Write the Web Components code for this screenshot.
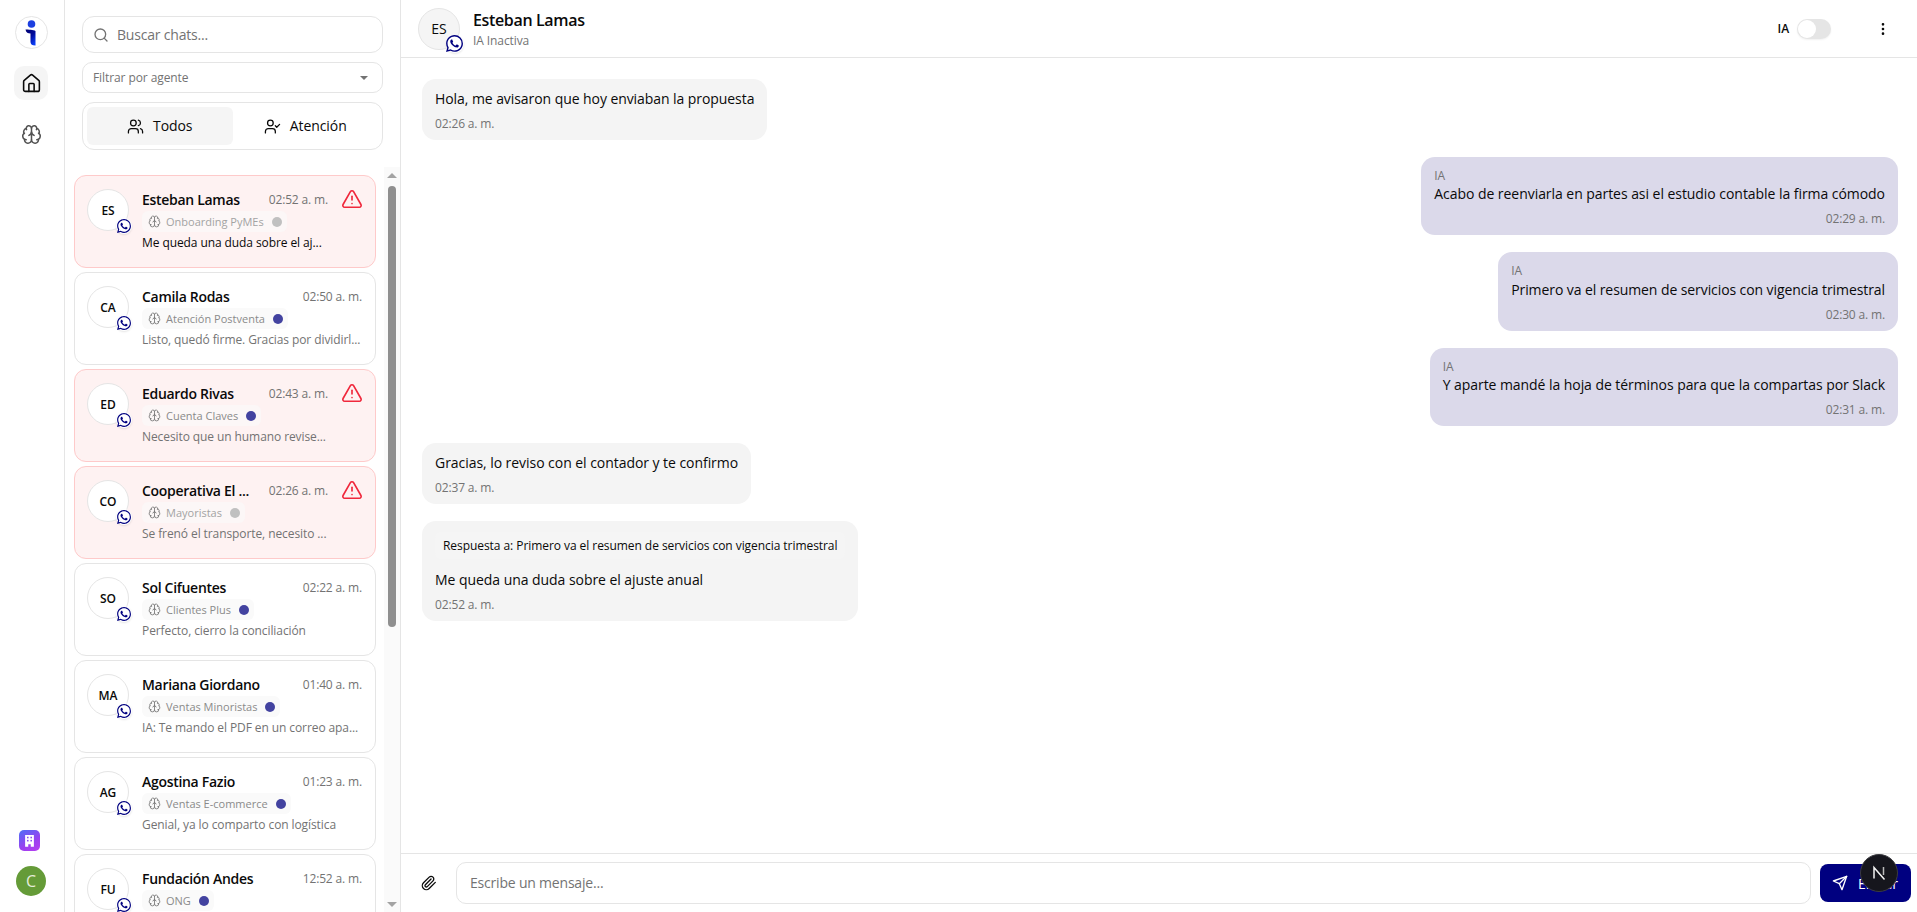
<!DOCTYPE html>
<html lang="es"><head><meta charset="utf-8"><title>Chats</title>
<style>
html,body{margin:0;height:100%;overflow:hidden;background:#fff;font-family:"Open Sans",sans-serif;color:#0a0a0a;letter-spacing:-.09px}
</style></head><body>
<chat-app></chat-app>
<script>
const S=(b,s=24,w=2,extra='')=>`<svg width="${s}" height="${s}" viewBox="0 0 24 24" fill="none" stroke="currentColor" stroke-width="${w}" stroke-linecap="round" stroke-linejoin="round" ${extra}>${b}</svg>`;
const I={
home:'<path d="M15 21v-8a1 1 0 0 0-1-1h-4a1 1 0 0 0-1 1v8"/><path d="M3 10a2 2 0 0 1 .709-1.528l7-5.999a2 2 0 0 1 2.582 0l7 5.999A2 2 0 0 1 21 10v9a2 2 0 0 1-2 2H5a2 2 0 0 1-2-2z"/>',
brain:'<path d="M12 18V5"/><path d="M15 13a4.47 4.47 0 0 1-3-4 4.47 4.47 0 0 1-3 4"/><path d="M17.598 6.5A3 3 0 1 0 12 5a3 3 0 1 0-5.598 1.5"/><path d="M17.997 5.125a4 4 0 0 1 2.526 5.77"/><path d="M18 18a4 4 0 0 0 2-7.464"/><path d="M19.967 17.483A4 4 0 1 1 12 18a4 4 0 1 1-7.967-.517"/><path d="M6 18a4 4 0 0 1-2-7.464"/><path d="M6.003 5.125a4 4 0 0 0-2.526 5.77"/>',
users:'<path d="M16 21v-2a4 4 0 0 0-4-4H6a4 4 0 0 0-4 4v2"/><circle cx="9" cy="7" r="4"/><path d="M22 21v-2a4 4 0 0 0-3-3.87"/><path d="M16 3.13a4 4 0 0 1 0 7.75"/>',
ucheck:'<path d="M16 21v-2a4 4 0 0 0-4-4H6a4 4 0 0 0-4 4v2"/><circle cx="9" cy="7" r="4"/><polyline points="16 11 18 13 22 9"/>',
alert:'<path d="m21.73 18-8-14a2 2 0 0 0-3.48 0l-8 14A2 2 0 0 0 4 21h16a2 2 0 0 0 1.73-3"/><path d="M12 9v4"/><path d="M12 17h.01"/>',
clip:'<path d="m21.44 11.05-9.19 9.19a6 6 0 0 1-8.49-8.49l8.57-8.57A4 4 0 1 1 18 8.84l-8.59 8.57a2 2 0 0 1-2.83-2.83l8.49-8.48"/>',
send:'<path d="m22 2-7 20-4-9-9-4Z"/><path d="M22 2 11 13"/>',
search:'<circle cx="11" cy="11" r="8"/><path d="m21 21-4.3-4.3"/>',
dots:'<circle cx="12" cy="5" r="1"/><circle cx="12" cy="12" r="1"/><circle cx="12" cy="19" r="1"/>'};
const WA='M17.472 14.382c-.297-.149-1.758-.867-2.03-.967-.273-.099-.471-.148-.67.15-.197.297-.767.966-.94 1.164-.173.199-.347.223-.644.075-.297-.15-1.255-.463-2.39-1.475-.883-.788-1.48-1.761-1.653-2.059-.173-.297-.018-.458.13-.606.134-.133.298-.347.446-.52.149-.174.198-.298.298-.497.099-.198.05-.371-.025-.52-.075-.149-.669-1.612-.916-2.207-.242-.579-.487-.5-.669-.51-.173-.008-.371-.01-.57-.01-.198 0-.52.074-.792.372-.272.297-1.04 1.016-1.04 2.479 0 1.462 1.065 2.875 1.213 3.074.149.198 2.096 3.2 5.077 4.487.709.306 1.262.489 1.694.625.712.227 1.36.195 1.871.118.571-.085 1.758-.719 2.006-1.413.248-.694.248-1.289.173-1.413-.074-.124-.272-.198-.57-.347m-5.421 7.403h-.004a9.87 9.87 0 01-5.031-1.378l-.361-.214-3.741.982.998-3.648-.235-.374a9.86 9.86 0 01-1.51-5.26c.001-5.45 4.436-9.884 9.888-9.884 2.64 0 5.122 1.03 6.988 2.898a9.825 9.825 0 012.893 6.994c-.003 5.45-4.437 9.884-9.885 9.884m8.413-18.297A11.815 11.815 0 0012.05 0C5.495 0 .16 5.335.157 11.892c0 2.096.547 4.142 1.588 5.945L.057 24l6.305-1.654a11.882 11.882 0 005.683 1.448h.005c6.554 0 11.89-5.335 11.893-11.893a11.821 11.821 0 00-3.48-8.413z';
const def=(name,html,init)=>customElements.define(name,class extends HTMLElement{
  connectedCallback(){ if(this.shadowRoot)return; const r=this.attachShadow({mode:'open'}); r.innerHTML=typeof html==='function'?html(this):html; init&&init(r,this);} });
const FONT='"Open Sans",sans-serif';

def('wa-avatar',h=>{const big=h.hasAttribute('big');return `<style>
:host{display:block;position:relative;width:42px;height:42px;flex:none}
.c{width:40px;height:40px;border:1px solid #e5e5e5;border-radius:50%;display:flex;align-items:center;justify-content:center;background:${big?'#f5f5f5':'#fff'};font-size:${big?14:12}px;font-weight:${big?400:600};color:#0a0a0a}
.w{position:absolute;right:${big?-3.5:-3}px;bottom:-3px;width:${big?18:16}px;height:${big?18:16}px;border-radius:50%;background:#fff;box-shadow:0 1px 2px rgba(0,0,0,.1);display:flex;align-items:center;justify-content:center}
svg{display:block;fill:#000080}
</style><div class="c"><slot></slot></div><div class="w"><svg width="${big?17:14}" height="${big?17:14}" viewBox="0 0 24 24"><path d="${WA}"/></svg></div>`});

def('app-rail',`<style>
:host{display:flex;flex-direction:column;align-items:center;width:65px;flex:none;border-right:1px solid #e5e5e5;box-sizing:border-box;padding:16px 2px 16px 0;color:#0a0a0a}
.logo{width:33px;height:33px;border:1px solid #e5e5e5;border-radius:50%;display:flex;align-items:center;justify-content:center;box-sizing:border-box}
.it{width:34px;height:34px;border-radius:10px;display:flex;align-items:center;justify-content:center;margin-top:17px}
.it.on{background:#f5f5f5}
.it.b{color:#525252}
.sp{flex:1}
.org{width:21px;height:21px;border-radius:5px;background:linear-gradient(150deg,#4d70f6 0%,#9a40f0 60%,#b83ff0 100%);display:flex;align-items:center;justify-content:center;color:#fff;margin-left:-3px}
.u{width:30px;height:30px;border-radius:50%;background:#659b38;color:#e4ecd9;font-size:16px;display:flex;align-items:center;justify-content:center;margin-top:15px}
</style>
<div class="logo"><svg width="14" height="26" viewBox="0 0 14 26"><defs><linearGradient id="g" x1="0" y1="0" x2=".7" y2="1"><stop offset="0" stop-color="#000070"/><stop offset=".55" stop-color="#000a9a"/><stop offset="1" stop-color="#0a3cf5"/></linearGradient></defs><circle cx="7.500" cy="4" r="3.800" fill="#1c3fe0"/><path d="M1.500 9.500c2.500 0 8 .3 10 1.500v14.500c-3.500 0-4.800-1-5-3.500V13.500c-2.500 0-4.500-1-5-4z" fill="url(#g)"/></svg></div>
<div class="it on">${S(I.home,21,1.8)}</div>
<div class="it b">${S(I.brain,21,1.7)}</div>
<div class="sp"></div>
<div class="org"><svg width="15" height="15" viewBox="0 0 24 24"><path fill="#fff" d="M5 3h14v19h-5v-4h-4v4H5z"/><g fill="#8a4ef0"><rect x="8" y="6" width="2.500" height="2.500"/><rect x="13.500" y="6" width="2.500" height="2.500"/><rect x="8" y="11" width="2.500" height="2.500"/><rect x="13.500" y="11" width="2.500" height="2.500"/></g></svg></div>
<div class="u">C</div>`);

def('search-box',`<style>
:host{display:flex;align-items:center;gap:8px;height:37px;box-sizing:border-box;border:1px solid #e5e5e5;border-radius:12px;padding:0 10px;color:#737373;font-size:14px;letter-spacing:-.2px}
svg{flex:none}
</style>${S(I.search,16,2)}<span><slot></slot></span>`);

def('agent-filter',`<style>
:host{display:flex;align-items:center;justify-content:space-between;height:31px;box-sizing:border-box;border:1px solid #e5e5e5;border-radius:10px;padding:0 14px 0 10px;color:#737373;font-size:12px}
i{width:0;height:0;border-left:4px solid transparent;border-right:4px solid transparent;border-top:4px solid #737373}
</style><span><slot></slot></span><i></i>`);

def('tab-bar',`<style>
:host{display:flex;height:48px;box-sizing:border-box;border:1px solid #e5e5e5;border-radius:12px;padding:4px;color:#0a0a0a;font-size:14px}
div{flex:1;display:flex;align-items:center;justify-content:center;gap:9px;border-radius:6px}
span{padding-bottom:2px}
.on{background:#f5f5f5}
</style><div class="on">${S(I.users,17,1.8)}<span>Todos</span></div><div>${S(I.ucheck,17,1.8)}<span>Atención</span></div>`);

def('chat-card',h=>{const a=h.hasAttribute('alert'),dark=h.hasAttribute('dark'),off=h.hasAttribute('off');return `<style>
:host{display:flex;box-sizing:border-box;height:93px;flex:none;border:1px solid ${a?'#fecaca':'#e5e5e5'};border-radius:12px;background:${a?'#fef2f2':'#fff'};padding:13px 13px 0 12px;gap:13px;position:relative}
.m{flex:1;min-width:0}
.t{display:flex;justify-content:space-between;align-items:center;height:20px}
.n{font-size:14px;font-weight:600;letter-spacing:-.3px;color:#0a0a0a;white-space:nowrap}
.h{font-size:12px;letter-spacing:-.15px;color:#737373;white-space:nowrap;margin-left:auto}
.tw{display:flex;margin-top:2px}
.tag{display:inline-flex;align-items:center;height:21px;border-radius:6px;background:${a?'#fafafa99':'#fafafa'};padding:0 5px 0 6px;gap:5px;font-size:11px;letter-spacing:0;color:${off?'#a3a3a3':'#8a8a8a'}}
.tag svg{color:#737373}
.d{width:10px;height:10px;border-radius:50%;background:${off?'#c0c0c0':'#4343a0'};margin-left:3px}
.p{font-size:12px;line-height:17px;margin-top:2px;color:${dark?'#0a0a0a':'#737373'};white-space:nowrap}
.al{color:#f0283c;flex:none;margin:0 -1px 0 13px;display:flex}
</style>
<wa-avatar>${h.getAttribute('ini')}</wa-avatar>
<div class="m"><div class="t"><span class="n">${h.getAttribute('name')}</span><span class="h">${h.getAttribute('time')}</span>${a?`<span class="al">${S(I.alert,22,1.8)}</span>`:''}</div>
<div class="tw"><span class="tag">${S(I.brain,13,1.5)}<span>${h.getAttribute('tag')}</span><i class="d"></i></span></div>
<div class="p">${h.getAttribute('prev')||''}</div></div>`});

def('chat-list',`<style>
:host{display:block;position:relative;flex:1;min-height:0;overflow:hidden}
.v{display:flex;flex-direction:column;gap:4px;padding:0 24px 0 9px;margin-top:8px}
.sb{position:absolute;right:0;top:0;bottom:0;width:16px;background:#fafafa;display:flex;flex-direction:column;align-items:center}
.th{width:8px;height:441px;border-radius:4px;background:#8f8f8f;margin-top:19px}
.u,.dn{position:absolute;width:0;height:0;border-left:5px solid transparent;border-right:5px solid transparent}
.u{top:6px;border-bottom:5px solid #a3a3a3}
.dn{bottom:5px;border-top:5px solid #a3a3a3}
</style><div class="v"><slot></slot></div><div class="sb"><i class="u"></i><div class="th"></div><i class="dn"></i></div>`);

def('chat-sidebar',`<style>
:host{display:flex;flex-direction:column;width:336px;flex:none;border-right:1px solid #e5e5e5;box-sizing:border-box;font-family:${FONT}}
.top{display:flex;flex-direction:column;gap:9px;padding:16px 17px 17px 17px}
.l{flex:1;min-height:0;display:flex;flex-direction:column}
</style><div class="top"><slot name="top"></slot></div><div class="l"><slot></slot></div>`);

def('chat-header',`<style>
:host{display:flex;align-items:center;height:58px;flex:none;box-sizing:border-box;border-bottom:1px solid #e5e5e5;padding:0 26px 0 17px}
.i{margin-left:13px;flex:1;align-self:flex-start;padding-top:10px}
.n{font-size:16px;font-weight:600;letter-spacing:-.35px;line-height:20px;color:#0a0a0a}
.s{font-size:12px;line-height:20px;margin-top:1px;color:#737373}
.ia{font-size:12px;font-weight:600;margin-right:8px}
.tg{width:34px;height:20px;border-radius:10px;background:#e5e5e5;position:relative;box-shadow:0 1px 2px rgba(0,0,0,.06)}
.tg:after{content:"";position:absolute;left:1px;top:1px;width:18px;height:18px;border-radius:50%;background:#fff}
.d{margin-left:44px;display:flex;color:#0a0a0a}
</style><wa-avatar big>ES</wa-avatar><div class="i"><div class="n">Esteban Lamas</div><div class="s">IA Inactiva</div></div><span class="ia">IA</span><div class="tg"></div><div class="d">${S(I.dots,16,2)}</div>`);

def('msg-bubble',h=>{const o=h.hasAttribute('out');const ls=h.getAttribute('ls')||'-.05';return `<style>
:host{display:block;box-sizing:border-box;width:fit-content;flex:none;border-radius:14px;padding:10px 13px 8px;background:${o?'#dbd9ea':'#f4f4f4'};${o?'margin-left:auto;':''}}
.w{font-size:12px;line-height:17.3px;color:#737373}
.b{font-size:14px;line-height:20px;color:#0a0a0a;white-space:nowrap;letter-spacing:${ls}px}
.t{font-size:12px;letter-spacing:-.15px;line-height:16px;color:#737373;margin-top:7px;${o?'text-align:right;':''}}
.q{font-size:12px;letter-spacing:-.06px;line-height:27px;height:27px;color:#0a0a0a;padding:0 8px;margin:1px 0 11px;background:#f5f5f5;border-radius:6px;white-space:nowrap}
</style>${o?'<div class="w">IA</div>':''}${h.getAttribute('quote')?`<div class="q">${h.getAttribute('quote')}</div>`:''}<div class="b"><slot></slot></div><div class="t">${h.getAttribute('time')}</div>`});

def('msg-list',`<style>
:host{display:flex;flex-direction:column;gap:17px;flex:1;min-height:0;overflow:hidden;padding:21px 19px 0 21px;box-sizing:border-box}
</style><slot></slot>`);

def('chat-composer',`<style>
:host{display:flex;align-items:center;height:59px;flex:none;box-sizing:border-box;border-top:1px solid #e5e5e5;padding:0 6px 0 20px;position:relative;z-index:0}
.c{display:flex;color:#0a0a0a;margin-right:19px}
.inp{flex:1;height:42px;box-sizing:border-box;border:1px solid #e5e5e5;border-radius:10px;padding:0 13px 2px;display:flex;align-items:center;font-size:14px;letter-spacing:-.2px;color:#737373}
.btn{margin-left:9px;width:91px;height:38px;box-sizing:border-box;padding-left:12px;border-radius:8px;background:#000080;color:#fff;display:flex;align-items:center;gap:10px;font-size:14px;font-weight:500}
</style><span class="c">${S(I.clip,16,2)}</span><div class="inp">Escribe un mensaje...</div><div class="btn">${S(I.send,16,2)}<span>Enviar</span></div>`);

def('chat-pane',`<style>
:host{display:flex;flex-direction:column;flex:1;min-width:0;height:100%;font-family:${FONT}}
</style><slot></slot>`);

def('next-badge',`<style>
:host{position:fixed;left:1860px;top:854px;width:38px;height:38px;box-sizing:border-box;border-radius:50%;background:#16161d;border:1.500px solid #3a3a3f;display:flex;align-items:center;justify-content:center;z-index:9}
svg{display:block}
</style><svg width="20" height="20" viewBox="0 0 20 20"><path d="M5 15.500V4.500L15.500 16.500" fill="none" stroke="#f4f4f4" stroke-width="1.500"/><path d="M14.500 4v8" fill="none" stroke="#bbb" stroke-width="1.500"/></svg>`);

const cards=[
['ES','Esteban Lamas','02:52 a. m.','Onboarding PyMEs','Me queda una duda sobre el aj...','alert dark off'],
['CA','Camila Rodas','02:50 a. m.','Atención Postventa','Listo, quedó firme. Gracias por dividirl...',''],
['ED','Eduardo Rivas','02:43 a. m.','Cuenta Claves','Necesito que un humano revise...','alert'],
['CO','Cooperativa El ...','02:26 a. m.','Mayoristas','Se frenó el transporte, necesito ...','alert off'],
['SO','Sol Cifuentes','02:22 a. m.','Clientes Plus','Perfecto, cierro la conciliación',''],
['MA','Mariana Giordano','01:40 a. m.','Ventas Minoristas','IA: Te mando el PDF en un correo apa...',''],
['AG','Agostina Fazio','01:23 a. m.','Ventas E-commerce','Genial, ya lo comparto con logística',''],
['FU','Fundación Andes','12:52 a. m.','ONG','','']];
def('chat-app',`<style>
:host{display:flex;height:912px;width:1917px;overflow:hidden}
</style>
<app-rail></app-rail>
<chat-sidebar>
 <search-box slot="top">Buscar chats...</search-box>
 <agent-filter slot="top">Filtrar por agente</agent-filter>
 <tab-bar slot="top"></tab-bar>
 <chat-list>${cards.map(c=>`<chat-card ini="${c[0]}" name="${c[1]}" time="${c[2]}" tag="${c[3]}" prev="${c[4]}" ${c[5]}></chat-card>`).join('')}</chat-list>
</chat-sidebar>
<chat-pane>
 <chat-header></chat-header>
 <msg-list>
  <msg-bubble ls="-.07" time="02:26 a. m.">Hola, me avisaron que hoy enviaban la propuesta</msg-bubble>
  <msg-bubble out time="02:29 a. m.">Acabo de reenviarla en partes asi el estudio contable la firma cómodo</msg-bubble>
  <msg-bubble out ls="-.086" time="02:30 a. m.">Primero va el resumen de servicios con vigencia trimestral</msg-bubble>
  <msg-bubble out ls="-.06" time="02:31 a. m.">Y aparte mandé la hoja de términos para que la compartas por Slack</msg-bubble>
  <msg-bubble time="02:37 a. m.">Gracias, lo reviso con el contador y te confirmo</msg-bubble>
  <msg-bubble time="02:52 a. m." quote="Respuesta a: Primero va el resumen de servicios con vigencia trimestral">Me queda una duda sobre el ajuste anual</msg-bubble>
 </msg-list>
 <chat-composer></chat-composer>
</chat-pane>
<next-badge></next-badge>`);
</script></body></html>
